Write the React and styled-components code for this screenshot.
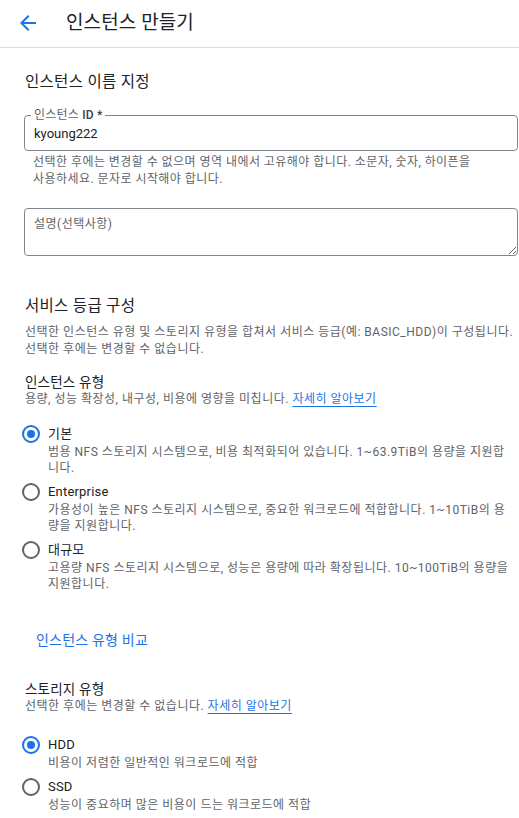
import React from "react";
import styled, { createGlobalStyle } from "styled-components";

const Global = createGlobalStyle`
  html, body { margin: 0; padding: 0; background: #fff; }
  body {
    font-family: Roboto, "Noto Sans CJK KR", "Noto Sans", sans-serif;
    color: #202124;
    -webkit-font-smoothing: antialiased;
  }
  * { box-sizing: border-box; }
`;

const Page = styled.div`
  width: 519px;
  min-height: 818px;
  overflow: hidden;
`;

const Header = styled.header`
  height: 48px;
  display: flex;
  align-items: center;
  gap: 26px;
  padding: 0 0 2px 16px;
  border-bottom: 1px solid #dadce0;
`;

const BackButton = styled.button`
  width: 24px;
  height: 24px;
  padding: 0;
  border: 0;
  background: none;
  display: flex;
  align-items: center;
  justify-content: center;
  color: #1a73e8;
  cursor: pointer;
`;

const Title = styled.h1`
  margin: 0;
  font-size: 19px;
  font-weight: 400;
  line-height: 24px;
  letter-spacing: 0.1px;
  color: #202124;
`;

const Content = styled.main`
  padding: 0 1px 0 24px;
`;

const SectionTitle = styled.h2`
  margin: ${(p) => p.$top}px 0 0 1px;
  font-size: 15.5px;
  font-weight: 400;
  line-height: 20px;
  letter-spacing: 0.3px;
  color: #202124;
`;

const SubTitle = styled.h3`
  margin: ${(p) => p.$top}px 0 0 1px;
  font-size: 13.5px;
  font-weight: 400;
  line-height: 18px;
  letter-spacing: 0.2px;
  color: #202124;
`;

const Desc = styled.p`
  margin: ${(p) => p.$top || 0}px 0 0 1px;
  font-size: 12px;
  line-height: 17px;
  letter-spacing: 0.5px;
  color: #5f6368;
`;

const Link = styled.a`
  color: #1a73e8;
  text-decoration: underline;
  text-underline-offset: 3px;
  cursor: pointer;
`;

const Field = styled.div`
  position: relative;
  margin-top: 23px;
  width: 494px;
  height: 36px;
  border: 1px solid #80868b;
  border-radius: 4px;
  display: flex;
  align-items: center;
  padding: 0 9px;
`;

const FloatLabel = styled.label`
  position: absolute;
  top: -9px;
  left: 6px;
  padding: 0 3px;
  background: #fff;
  font-size: 12px;
  line-height: 16px;
  letter-spacing: 0.2px;
  color: #5f6368;
`;

const Strong = styled.span`
  font-weight: 500;
  color: #3c4043;
`;

const Input = styled.input`
  border: 0;
  outline: none;
  padding: 0;
  width: 100%;
  font-family: inherit;
  font-size: 13px;
  color: #202124;
  background: transparent;
`;

const Helper = styled.p`
  margin: 3px 0 0 9px;
  width: 476px;
  font-size: 12px;
  line-height: 17px;
  letter-spacing: 0.45px;
  color: #5f6368;
`;

const TextArea = styled.textarea`
  display: block;
  margin-top: 20px;
  width: 494px;
  height: 48px;
  border: 1px solid #80868b;
  border-radius: 4px;
  padding: 7px 9px;
  font-family: inherit;
  font-size: 12px;
  line-height: 16px;
  letter-spacing: 0.5px;
  color: #202124;
  resize: vertical;
  outline: none;
  &::placeholder { color: #5f6368; }
`;

const RadioGroup = styled.div`
  margin-top: ${(p) => p.$top}px;
  display: flex;
  flex-direction: column;
  gap: 6px;
`;

const RadioItem = styled.label`
  display: flex;
  align-items: flex-start;
  gap: 8px;
  margin-left: -2px;
  cursor: pointer;
`;

const RadioCircle = styled.span`
  flex: none;
  width: 18px;
  height: 18px;
  margin-top: 1px;
  border-radius: 50%;
  border: 2px solid ${(p) => (p.$checked ? "#1a73e8" : "#5f6368")};
  display: flex;
  align-items: center;
  justify-content: center;
  &::after {
    content: "";
    width: 8px;
    height: 8px;
    border-radius: 50%;
    background: ${(p) => (p.$checked ? "#1a73e8" : "transparent")};
  }
`;

const RadioText = styled.div`
  display: flex;
  flex-direction: column;
  width: 465px;
`;

const RadioLabel = styled.span`
  font-size: 13px;
  line-height: 20px;
  letter-spacing: 0.2px;
  color: #202124;
`;

const RadioDesc = styled.span`
  font-size: 12px;
  line-height: 16px;
  letter-spacing: 0.5px;
  color: #5f6368;
`;

const TextButton = styled.button`
  margin-top: 29px;
  height: 36px;
  padding: 0 12px;
  border: 0;
  background: none;
  font-family: inherit;
  font-size: 14px;
  letter-spacing: 0.2px;
  color: #1a73e8;
  cursor: pointer;
  display: flex;
  align-items: center;
`;

const ArrowBack = () => (
  <svg width="24" height="24" viewBox="0 0 24 24" fill="currentColor">
    <path d="M20 11H7.83l5.59-5.59L12 4l-8 8 8 8 1.41-1.41L7.83 13H20v-2z" />
  </svg>
);

const Radio = ({ checked, label, desc }) => (
  <RadioItem>
    <RadioCircle $checked={checked} />
    <RadioText>
      <RadioLabel>{label}</RadioLabel>
      <RadioDesc>{desc}</RadioDesc>
    </RadioText>
  </RadioItem>
);

export default function App() {
  return (
    <Page>
      <Global />
      <Header>
        <BackButton aria-label="뒤로">
          <ArrowBack />
        </BackButton>
        <Title>인스턴스 만들기</Title>
      </Header>
      <Content>
        <SectionTitle $top={24}>인스턴스 이름 지정</SectionTitle>
        <Field>
          <FloatLabel>
            인스턴스 <Strong>ID *</Strong>
          </FloatLabel>
          <Input defaultValue="kyoung222" />
        </Field>
        <Helper>
          선택한 후에는 변경할 수 없으며 영역 내에서 고유해야 합니다. 소문자, 숫자, 하이픈을
          <br />
          사용하세요. 문자로 시작해야 합니다.
        </Helper>
        <TextArea placeholder="설명(선택사항)" />

        <SectionTitle $top={40}>서비스 등급 구성</SectionTitle>
        <Desc $top={8}>
          선택한 인스턴스 유형 및 스토리지 유형을 합쳐서 서비스 등급(예: BASIC_HDD)이 구성됩니다.
          선택한 후에는 변경할 수 없습니다.
        </Desc>

        <SubTitle $top={15}>인스턴스 유형</SubTitle>
        <Desc>
          용량, 성능 확장성, 내구성, 비용에 영향을 미칩니다. <Link>자세히 알아보기</Link>
        </Desc>

        <RadioGroup $top={16}>
          <Radio
            checked
            label="기본"
            desc="범용 NFS 스토리지 시스템으로, 비용 최적화되어 있습니다. 1~63.9TiB의 용량을 지원합니다."
          />
          <Radio
            label="Enterprise"
            desc="가용성이 높은 NFS 스토리지 시스템으로, 중요한 워크로드에 적합합니다. 1~10TiB의 용량을 지원합니다."
          />
          <Radio
            label="대규모"
            desc="고용량 NFS 스토리지 시스템으로, 성능은 용량에 따라 확장됩니다. 10~100TiB의 용량을 지원합니다."
          />
        </RadioGroup>

        <TextButton>인스턴스 유형 비교</TextButton>

        <SubTitle $top={23}>스토리지 유형</SubTitle>
        <Desc>
          선택한 후에는 변경할 수 없습니다. <Link>자세히 알아보기</Link>
        </Desc>

        <RadioGroup $top={20}>
          <Radio checked label="HDD" desc="비용이 저렴한 일반적인 워크로드에 적합" />
          <Radio label="SSD" desc="성능이 중요하며 많은 비용이 드는 워크로드에 적합" />
        </RadioGroup>
      </Content>
    </Page>
  );
}
